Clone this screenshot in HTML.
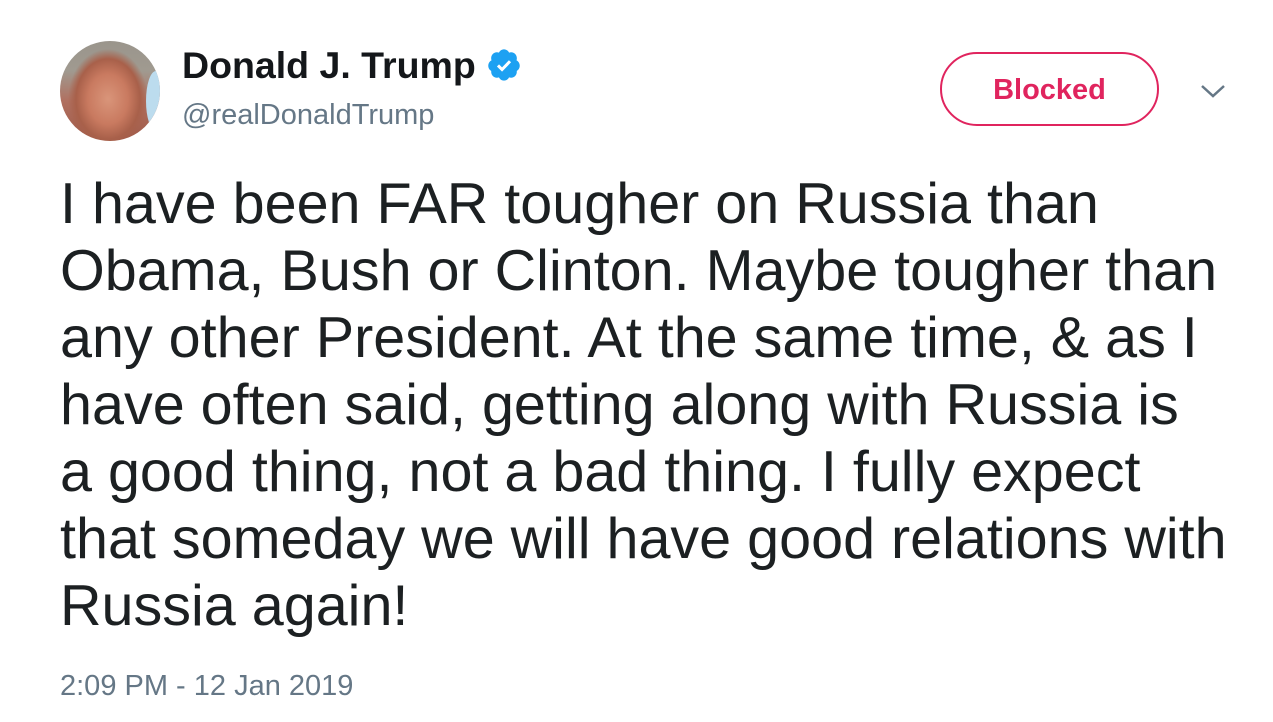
<!DOCTYPE html>
<html><head><style>
body{margin:0;width:1273px;height:722px;background:#fff;font-family:"Liberation Sans",sans-serif;position:relative;overflow:hidden}
.av{position:absolute;left:60px;top:41px;width:100px;height:100px;border-radius:50%;background:radial-gradient(ellipse 40% 50% at 48% 58%,#d9957a 0,#c97a60 50%,#a8604a 80%,rgba(150,110,90,0) 100%),linear-gradient(#9a958c 0,#a09a90 30%,#b07060 60%,#a05a48 100%);overflow:hidden}
.av:after{content:"";position:absolute;right:-6px;top:30px;width:20px;height:60px;background:#bcdcee;border-radius:50%}
.name{position:absolute;left:182px;top:44px;font-size:37.5px;font-weight:bold;color:#14171a;white-space:nowrap}
.handle{position:absolute;left:182px;top:99px;font-size:29px;color:#657786}
.btn{position:absolute;left:940px;top:52px;width:215px;height:70px;border:2px solid #e0245e;border-radius:38px;color:#e0245e;font-weight:bold;font-size:29px;text-align:center;line-height:72px}
.chev{position:absolute;left:1200px;top:82px}
.text{position:absolute;left:60px;top:171px;width:1200px;font-size:57.5px;line-height:67px;color:#1c2022;white-space:nowrap}
.time{position:absolute;left:60px;top:670px;font-size:29px;color:#657786}
</style></head><body>
<div class="av"></div>
<div class="name">Donald J. Trump <svg width="36" height="36" viewBox="0 0 24 24" style="vertical-align:-5px;margin-left:0px"><path fill="#1da1f2" d="M22.5 12.5c0-1.58-.88-2.950-2.160-3.600.15-.44.23-.92.23-1.4 0-2.2-1.7-3.98-3.82-3.98-.47 0-.92.08-1.34.25C14.78 2.500 13.5 1.6 12 1.6s-2.78.9-3.4 2.17c-.42-.17-.87-.25-1.34-.25-2.12 0-3.82 1.78-3.82 3.98 0 .48.08.96.23 1.4-1.28.65-2.16 2.02-2.16 3.6 0 1.5.8 2.8 1.98 3.48-.02.17-.03.34-.03.52 0 2.2 1.7 3.98 3.82 3.98.47 0 .92-.09 1.34-.25.62 1.26 1.9 2.150 3.38 2.150 1.5 0 2.77-.9 3.38-2.150.42.16.87.25 1.34.25 2.12 0 3.82-1.78 3.82-3.98 0-.18-.01-.35-.03-.52 1.17-.68 1.98-1.97 1.98-3.48z"/><path fill="none" stroke="#fff" stroke-width="2" d="M8 12.3l2.7 2.7 5.3-5.5"/></svg></div>
<div class="handle">@realDonaldTrump</div>
<div class="btn">Blocked</div>
<svg class="chev" width="26" height="18" viewBox="0 0 26 18"><path d="M2 4l11 10 11-10" fill="none" stroke="#657786" stroke-width="2.5"/></svg>
<div class="text">I have been FAR tougher on Russia than<br>Obama, Bush or Clinton. Maybe tougher than<br>any other President. At the same time, &amp; as I<br>have often said, getting along with Russia is<br>a good thing, not a bad thing. I fully expect<br>that someday we will have good relations with<br>Russia again!</div>
<div class="time">2:09 PM - 12 Jan 2019</div>
</body></html>
